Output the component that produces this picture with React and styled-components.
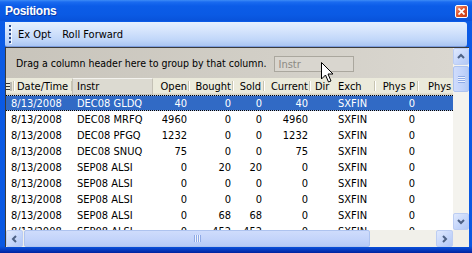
import React from 'react';
import styled, { createGlobalStyle, css } from 'styled-components';

const GlobalStyle = createGlobalStyle`
  html, body { margin: 0; padding: 0; }
  body {
    font-family: "DejaVu Sans Condensed", "DejaVu Sans", sans-serif;
    font-size: 11px;
    background: #ffffff;
  }
`;

const Window = styled.div`
  position: relative;
  width: 472px;
  height: 253px;
  box-sizing: border-box;
  display: flex;
  flex-direction: column;
  overflow: hidden;
  background: linear-gradient(to bottom, #0b5be6 0, #0a58e2 246px, #0842c8 249px, #01229e 253px);
`;

const TitleBar = styled.div`
  flex: none;
  height: 21px;
  display: flex;
  align-items: center;
  justify-content: space-between;
  padding: 0 4px 0 5px;
  background: linear-gradient(to bottom, #3d8cf6 0, #1a6bf0 2px, #0b5ce8 6px, #0a5ae4 15px, #0852da 21px);
`;

const Title = styled.span`
  color: #ffffff;
  font: bold 12px "Liberation Sans", Arial, sans-serif;
  letter-spacing: -0.3px;
  text-shadow: 1px 1px 0 #0a3aa8;
`;

const CloseButton = styled.div`
  width: 13px;
  height: 13px;
  box-sizing: border-box;
  margin-top: 1px;
  border: 1px solid #ffffff;
  border-radius: 2px;
  display: flex;
  align-items: center;
  justify-content: center;
  background: linear-gradient(135deg, #f09a7c 0%, #e0562f 45%, #c43a14 100%);
`;

const Body = styled.div`
  flex: 1;
  min-height: 0;
  display: flex;
  flex-direction: column;
  padding: 1px 3px 6px 5px;
`;

const Toolbar = styled.div`
  flex: none;
  height: 25px;
  box-sizing: border-box;
  margin-right: 2px;
  display: flex;
  align-items: center;
  gap: 7px;
  padding-left: 4px;
  border-radius: 0 3px 3px 2px;
  border-bottom: 1px solid #7d9ddd;
  background: linear-gradient(to bottom, #e6f0fe 0%, #d3e3fc 40%, #c0d6f9 75%, #aac5f2 100%);
`;

const Grip = styled.span`
  width: 2px;
  height: 18px;
  margin-right: -2px;
  background: repeating-linear-gradient(to bottom, #2c4a8c 0 2px, transparent 2px 4px);
  box-shadow: 1px 1px 0 rgba(255, 255, 255, 0.8);
`;

const ToolButton = styled.span`
  padding: 0 2px;
  color: #000000;
  font-size: 11px;
  white-space: nowrap;
`;

const Grid = styled.div`
  flex: 1;
  min-height: 0;
  display: flex;
  flex-direction: column;
  border-top: 1px solid #3a3a3a;
  border-left: 1px solid #3a3a3a;
  background: #ffffff;
`;

const GridTop = styled.div`
  flex: none;
  height: 182px;
  display: flex;
`;

const GridMain = styled.div`
  flex: 1;
  min-width: 0;
  display: flex;
  flex-direction: column;
  overflow: hidden;
`;

const GroupPanel = styled.div`
  flex: none;
  height: 30px;
  display: flex;
  align-items: center;
  gap: 7px;
  padding-left: 10px;
  background: linear-gradient(to right, #c8c4bb 0%, #d2cfc7 60%, #dad7d0 100%);
`;

const GroupHint = styled.span`
  color: #000000;
  font-size: 10.5px;
  white-space: nowrap;
  margin-top: -1px;
`;

const GroupBox = styled.div`
  width: 80px;
  height: 16px;
  box-sizing: border-box;
  margin-top: 2px;
  padding-left: 4px;
  display: flex;
  align-items: center;
  border: 1px solid #aaa79e;
  background: #d9d6cf;
  color: #8c8a84;
  font-size: 11px;
`;

const HeaderRow = styled.div`
  flex: none;
  height: 17px;
  display: flex;
  background: #ebeadb;
  box-shadow: inset 0 -1px 0 #d8d5c4, inset 0 -2px 0 #e2dfcf;
`;

const HeaderCell = styled.div`
  position: relative;
  flex: none;
  width: ${p => p.$w}px;
  box-sizing: border-box;
  display: flex;
  align-items: center;
  justify-content: ${p => (p.$right ? 'flex-end' : 'flex-start')};
  padding-left: ${p => p.$pl || 0}px;
  padding-right: ${p => p.$pr || 0}px;
  color: #000000;
  white-space: nowrap;
  overflow: visible;
  ${p => p.$active && css`
    background: #dcdad1;
    border: 1px solid #c4c1b5;
    border-top-color: #f4f3ee;
    padding-left: ${(p.$pl || 0) - 1}px;
  `}
  ${p => p.$sep && css`
    &::after {
      content: "";
      position: absolute;
      right: 0;
      top: 3px;
      bottom: 4px;
      width: 1px;
      background: #c7c4b2;
      box-shadow: 1px 0 0 #ffffff;
    }
  `}
`;

const Rows = styled.div`
  flex: 1;
  min-height: 0;
  overflow: hidden;
`;

const Row = styled.div`
  height: 16px;
  display: flex;
  align-items: center;
  color: #000000;
  ${p => p.$selected && css`
    color: #ffffff;
    background:
      repeating-linear-gradient(to right, #000 0 1px, #a9c0e8 1px 2px) top / 100% 1px no-repeat,
      repeating-linear-gradient(to right, #000 0 1px, #a9c0e8 1px 2px) bottom / 100% 1px no-repeat,
      #316ac5;
  `}
`;

const Cell = styled.div`
  flex: none;
  width: ${p => p.$w}px;
  box-sizing: border-box;
  text-align: ${p => (p.$right ? 'right' : 'left')};
  padding-left: ${p => p.$pl || 0}px;
  padding-right: ${p => p.$pr || 0}px;
  white-space: nowrap;
  overflow: hidden;
`;

const VScroll = styled.div`
  flex: none;
  width: 16px;
  display: flex;
  flex-direction: column;
  background: #f4f3ee;
`;

const Track = styled.div`
  flex: 1;
`;

const ScrollButton = styled.div`
  flex: none;
  width: ${p => p.$w || 16}px;
  height: ${p => p.$h || 17}px;
  box-sizing: border-box;
  display: flex;
  align-items: center;
  justify-content: center;
  border: 1px solid #bccdf3;
  border-radius: 2px;
  background: linear-gradient(135deg, #e0e9fd 0%, #c8d8fb 50%, #b3c8f5 100%);
`;

const Thumb = styled.div`
  flex: none;
  box-sizing: border-box;
  display: flex;
  align-items: center;
  justify-content: center;
  border: 1px solid #aec3ef;
  border-radius: 2px;
  ${p => p.$vertical ? css`
    height: 26px;
    margin-top: 1px;
    background: linear-gradient(to right, #cfdcfc 0%, #c2d3fa 60%, #b6cbf6 100%);
  ` : css`
    width: 346px;
    margin-left: 1px;
    background: linear-gradient(to bottom, #cfdcfc 0%, #c2d3fa 60%, #b6cbf6 100%);
  `}
`;

const ThumbGrip = styled.span`
  ${p => p.$vertical ? css`
    width: 7px;
    height: 7px;
    background: repeating-linear-gradient(to bottom, #8faae6 0 1px, #eef3fe 1px 2px);
  ` : css`
    width: 7px;
    height: 7px;
    background: repeating-linear-gradient(to right, #8faae6 0 1px, #eef3fe 1px 2px);
  `}
`;

const GridBottom = styled.div`
  flex: none;
  height: 17px;
  display: flex;
`;

const HScroll = styled.div`
  flex: 1;
  display: flex;
  background: #f1f0ea;
`;

const Corner = styled.div`
  flex: none;
  width: 16px;
  background: #f1efe8;
`;

const Cursor = styled.svg`
  position: absolute;
  left: 321px;
  top: 62px;
  pointer-events: none;
`;

const Arrow = ({ dir }) => {
  const paths = {
    up: 'M1 5 L4 2 L7 5',
    down: 'M1 2 L4 5 L7 2',
    left: 'M5 1 L2 4 L5 7',
    right: 'M2 1 L5 4 L2 7',
  };
  const vertical = dir === 'up' || dir === 'down';
  return (
    <svg width={vertical ? 8 : 7} height={vertical ? 7 : 8} viewBox={vertical ? '0 0 8 7' : '0 0 7 8'}>
      <path d={paths[dir]} fill="none" stroke="#4d6185" strokeWidth="2" />
    </svg>
  );
};

const headers = [
  { label: '', w: 8, sep: true, icon: true },
  { label: 'Date/Time', w: 58, pl: 3, sep: true },
  { label: 'Instr', w: 81, pl: 5, active: true },
  { label: 'Open', w: 36, right: true, pr: 2, sep: true },
  { label: 'Bought', w: 44, right: true, pr: 2, sep: true },
  { label: 'Sold', w: 31, right: true, pr: 3, sep: true },
  { label: 'Current', w: 46, right: true, pr: 2, sep: true },
  { label: 'Dir', w: 26, pl: 5 },
  { label: 'Exch', w: 39, pl: 2, sep: true },
  { label: 'Phys P', w: 43, right: true, pr: 3, sep: true },
  { label: 'Phys', w: 45, pl: 10 },
];

const cellSpecs = [
  { w: 66, pl: 5 },
  { w: 81, pl: 5 },
  { w: 36, right: true, pr: 2 },
  { w: 44, right: true, pr: 2 },
  { w: 31, right: true, pr: 2 },
  { w: 46, right: true, pr: 2 },
  { w: 26 },
  { w: 39, pl: 2 },
  { w: 43, right: true, pr: 3 },
  { w: 45 },
];

const data = [
  ['8/13/2008', 'DEC08 GLDQ', '40', '0', '0', '40', '', 'SXFIN', '0', ''],
  ['8/13/2008', 'DEC08 MRFQ', '4960', '0', '0', '4960', '', 'SXFIN', '0', ''],
  ['8/13/2008', 'DEC08 PFGQ', '1232', '0', '0', '1232', '', 'SXFIN', '0', ''],
  ['8/13/2008', 'DEC08 SNUQ', '75', '0', '0', '75', '', 'SXFIN', '0', ''],
  ['8/13/2008', 'SEP08 ALSI', '0', '20', '20', '0', '', 'SXFIN', '0', ''],
  ['8/13/2008', 'SEP08 ALSI', '0', '0', '0', '0', '', 'SXFIN', '0', ''],
  ['8/13/2008', 'SEP08 ALSI', '0', '0', '0', '0', '', 'SXFIN', '0', ''],
  ['8/13/2008', 'SEP08 ALSI', '0', '68', '68', '0', '', 'SXFIN', '0', ''],
  ['8/13/2008', 'SEP08 ALSI', '0', '452', '452', '0', '', 'SXFIN', '0', ''],
];

export default function App() {
  return (
    <>
      <GlobalStyle />
      <Window>
        <TitleBar>
          <Title>Positions</Title>
          <CloseButton>
            <svg width="7" height="7" viewBox="0 0 7 7">
              <path d="M0.5 0.5 L6.5 6.5 M6.5 0.5 L0.5 6.5" stroke="#ffffff" strokeWidth="1.7" />
            </svg>
          </CloseButton>
        </TitleBar>
        <Body>
          <Toolbar>
            <Grip />
            <ToolButton>Ex Opt</ToolButton>
            <ToolButton>Roll Forward</ToolButton>
          </Toolbar>
          <Grid>
            <GridTop>
              <GridMain>
                <GroupPanel>
                  <GroupHint>Drag a column header here to group by that column.</GroupHint>
                  <GroupBox>Instr</GroupBox>
                </GroupPanel>
                <HeaderRow>
                  {headers.map((h, i) => (
                    <HeaderCell
                      key={i}
                      $w={h.w}
                      $pl={h.pl}
                      $pr={h.pr}
                      $right={h.right}
                      $sep={h.sep}
                      $active={h.active}
                    >
                      {h.icon ? (
                        <svg width="6" height="9" viewBox="0 0 6 9">
                          <path d="M0 1.5 H4 M0 4.5 H4 M0 7.5 H4" stroke="#333" strokeWidth="1" />
                          <path d="M5 0 V9" stroke="#888" strokeWidth="1" />
                        </svg>
                      ) : (
                        h.label
                      )}
                    </HeaderCell>
                  ))}
                </HeaderRow>
                <Rows>
                  {data.map((r, ri) => (
                    <Row key={ri} $selected={ri === 0}>
                      {r.map((v, ci) => {
                        const s = cellSpecs[ci];
                        return (
                          <Cell key={ci} $w={s.w} $pl={s.pl} $pr={s.pr} $right={s.right}>
                            {v}
                          </Cell>
                        );
                      })}
                    </Row>
                  ))}
                </Rows>
              </GridMain>
              <VScroll>
                <ScrollButton>
                  <Arrow dir="up" />
                </ScrollButton>
                <Thumb $vertical>
                  <ThumbGrip $vertical />
                </Thumb>
                <Track />
                <ScrollButton>
                  <Arrow dir="down" />
                </ScrollButton>
              </VScroll>
            </GridTop>
            <GridBottom>
              <HScroll>
                <ScrollButton $w={17}>
                  <Arrow dir="left" />
                </ScrollButton>
                <Thumb>
                  <ThumbGrip />
                </Thumb>
                <Track />
                <ScrollButton $w={17}>
                  <Arrow dir="right" />
                </ScrollButton>
              </HScroll>
              <Corner />
            </GridBottom>
          </Grid>
        </Body>
        <Cursor width="13" height="21" viewBox="0 0 13 21">
          <path
            d="M0.5 0.5 V17 L4.5 13 L7.5 20 L10 19 L7 12 H12 Z"
            fill="#ffffff"
            stroke="#000000"
            strokeWidth="1"
          />
        </Cursor>
      </Window>
    </>
  );
}
